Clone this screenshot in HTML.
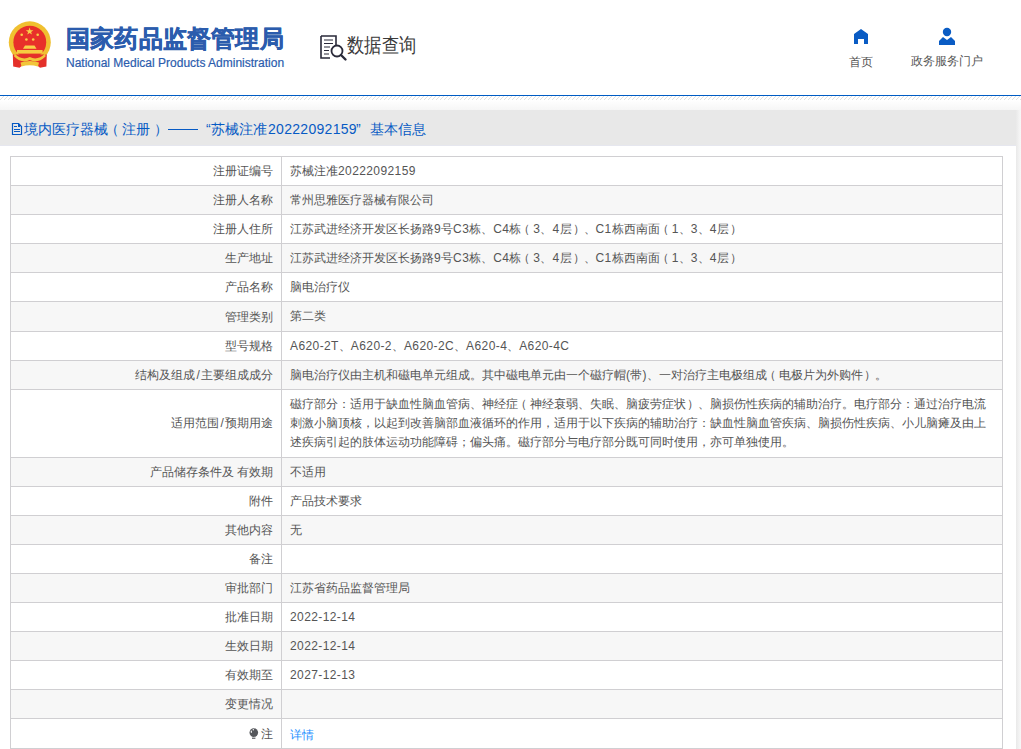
<!DOCTYPE html>
<html><head><meta charset="utf-8">
<style>
*{margin:0;padding:0;box-sizing:border-box}
html,body{width:1021px;height:749px;overflow:hidden;background:#fff;font-family:"Liberation Sans",sans-serif;font-size:12px;color:#555}
#hdr{position:absolute;left:0;top:0;width:1021px;height:95px;background:#fff}
#bline{position:absolute;left:0;top:95px;width:1021px;height:1px;background:#005cc4}
#stripe{position:absolute;left:0;top:96px;width:1021px;height:4px}
#grad{position:absolute;left:0;top:100px;width:1021px;height:10px;background:linear-gradient(#fff,#f6f6f6)}
#rside{position:absolute;left:1016px;top:110px;width:5px;height:639px;background:linear-gradient(90deg,#e9e9e9,#f8f8f8)}
#cont{position:absolute;left:0;top:110px;width:1016px;height:639px;background:#fff}
#band{position:absolute;left:0;top:0;width:1016px;height:36px;background:#e8e8e8;border-bottom:1px solid #e6e7ef}
.tt{position:absolute;top:10px;font-size:14px;color:#065ac4;white-space:nowrap;line-height:18px}
table{position:absolute;left:10px;top:46px;width:993px;border-collapse:collapse;table-layout:fixed}
td{border:1px solid #d0cfd2;font-size:12px;color:#555;line-height:19px;padding:0}
td.l{width:271px;text-align:right;padding-right:8px}
td.v{padding-left:8px}
tr:nth-child(even) td{background:#f7f7f7}
i{font-style:normal;letter-spacing:0.4px}
u{text-decoration:none;position:relative}
u.lp{left:-3px}
u.rp{left:1px}
</style></head><body>
<div id="hdr">
 <!-- emblem -->
 <svg style="position:absolute;left:0;top:0" width="60" height="75" viewBox="0 0 60 75">
  <circle cx="29.8" cy="42.3" r="21" fill="#f0c030"/>
  <circle cx="29.8" cy="42.2" r="16.4" fill="#e8302a"/>
  <path d="M29.6 27.6 l0.95 2.6 2.8 0 -2.25 1.7 0.85 2.7 -2.35 -1.65 -2.35 1.65 0.85 -2.7 -2.25 -1.7 2.8 0z" fill="#f8d048"/>
  <circle cx="21.7" cy="34.8" r="1.3" fill="#f8d048"/><circle cx="37.7" cy="34.8" r="1.3" fill="#f8d048"/>
  <circle cx="26.4" cy="39.5" r="1.3" fill="#f8d048"/><circle cx="33.2" cy="39.5" r="1.3" fill="#f8d048"/>
  <path d="M23 48.8 L25 45.6 H34.5 L36.5 48.8 Z" fill="#f8d048"/>
  <rect x="17" y="50" width="25.6" height="3.6" fill="#f6cc40"/>
  <path d="M12.8 54.5 H46.8 L46.4 66.5 L40 67.8 L36 64.5 H23.5 L19.5 67.8 L13.2 66.5 Z" fill="#e4302a"/>
  <path d="M14.5 53.5 Q22 61 29.8 57 Q37.5 61 45.2 53.5 L45.6 56.5 Q37.5 64 29.8 60 Q22 64 14.1 56.5 Z" fill="#f2c63a"/>
  <path d="M20.5 62.5 Q29.8 59.5 39 62.5 L38 66.5 Q29.8 64 21.5 66.5 Z" fill="#f2c63a"/>
 </svg>
 <div style="position:absolute;left:66px;top:25px;font-size:24px;font-weight:bold;color:#2b5cad;letter-spacing:0.2px;line-height:28px;white-space:nowrap;-webkit-text-stroke:0.4px #2b5cad">国家药品监督管理局</div>
 <div style="position:absolute;left:66px;top:56px;font-size:12px;color:#2b5cad;line-height:14px;white-space:nowrap;-webkit-text-stroke:0.2px #2b5cad">National Medical Products Administration</div>
 <!-- data query icon -->
 <svg style="position:absolute;left:319px;top:34px" width="30" height="28" viewBox="0 0 30 28">
  <path d="M2 2 H17 V11 M2 2 V24 H11" fill="none" stroke="#2a2a3a" stroke-width="1.6"/>
  <path d="M5 6 H14 M5 9.5 H14 M5 13 H11 M5 16.5 H10 M5 20 H10" stroke="#2a2a3a" stroke-width="1.2"/>
  <circle cx="18" cy="17" r="5.5" fill="none" stroke="#2a2a3a" stroke-width="1.8"/>
  <path d="M22 21 L26.5 25.5" stroke="#2a2a3a" stroke-width="2.4" stroke-linecap="round"/>
 </svg>
 <div style="position:absolute;left:347px;top:32px;font-size:18px;color:#3a3a3a;line-height:24px;white-space:nowrap;transform:scale(0.97,1.12);transform-origin:0 0">数据查询</div>
 <!-- home -->
 <svg style="position:absolute;left:854px;top:29px" width="14" height="15" viewBox="0 0 14 15">
  <path d="M7 0 L14 5 V15 H10 V10 H4 V15 H0 V5 Z" fill="#0a5cc4"/>
 </svg>
 <div style="position:absolute;left:849px;top:55px;font-size:12px;color:#555;line-height:14px;white-space:nowrap">首页</div>
 <!-- user -->
 <svg style="position:absolute;left:938px;top:27px" width="18" height="19" viewBox="0 0 18 19">
  <circle cx="9" cy="5" r="4.2" fill="#0a5cc4"/>
  <path d="M5 10 L9 13 L13 10 L17 14 V18 H1 V14 Z" fill="#0a5cc4"/>
 </svg>
 <div style="position:absolute;left:911px;top:54px;font-size:12px;color:#555;line-height:14px;white-space:nowrap">政务服务门户</div>
</div>
<div id="bline"></div>
<svg id="stripe" width="1021" height="4" shape-rendering="crispEdges"><defs><pattern id="pt" width="4" height="4" patternUnits="userSpaceOnUse"><rect x="3" y="0" width="1" height="1" fill="#e0e0e0"/><rect x="2" y="1" width="1" height="1" fill="#e0e0e0"/><rect x="1" y="2" width="1" height="1" fill="#e0e0e0"/><rect x="0" y="3" width="1" height="1" fill="#e0e0e0"/></pattern></defs><rect width="1021" height="4" fill="url(#pt)"/></svg>
<div id="grad"></div>
<div id="rside"></div>
<div id="cont">
 <div id="band"><svg style="position:absolute;left:11px;top:13px" width="12" height="13" viewBox="0 0 12 13" shape-rendering="crispEdges">
  <path d="M1.5 0.5 H7.5 L10.5 3.5 V11.5 H1.5 Z" fill="none" stroke="#065ac4" stroke-width="1.2" shape-rendering="auto"/>
  <rect x="7" y="1" width="2" height="3" fill="#065ac4"/>
  <rect x="3" y="3" width="3" height="1" fill="#065ac4"/>
  <rect x="3" y="6" width="6" height="1" fill="#065ac4"/>
  <rect x="3" y="8" width="6" height="1" fill="#065ac4"/>
 </svg>
 <div class="tt" style="left:24px">境内医疗器械</div>
 <div class="tt" style="left:105px">（</div>
 <div class="tt" style="left:122px">注册</div>
 <div class="tt" style="left:153.5px">）</div>
 <div class="tt" style="left:168px;width:30px;height:1px;top:19px;background:#065ac4"></div>
 <div class="tt" style="left:206px">“</div>
 <div class="tt" style="left:211px">苏械注准</div>
 <div class="tt" style="left:268px;letter-spacing:0.3px">20222092159</div>
 <div class="tt" style="left:356px">”</div>
 <div class="tt" style="left:370px">基本信息</div></div>
 <table>
  <tr style="height:29px"><td class="l">注册证编号</td><td class="v">苏械注准<i>20222092159</i></td></tr>
  <tr style="height:29px"><td class="l">注册人名称</td><td class="v">常州思雅医疗器械有限公司</td></tr>
  <tr style="height:29px"><td class="l">注册人住所</td><td class="v">江苏武进经济开发区长扬路<i>9</i>号<i>C3</i>栋、<i>C4</i>栋<u class="lp">（</u><i>3</i>、<i>4</i>层<u class="rp">）</u>、<i>C1</i>栋西南面<u class="lp">（</u><i>1</i>、<i>3</i>、<i>4</i>层<u class="rp">）</u></td></tr>
  <tr style="height:29px"><td class="l">生产地址</td><td class="v">江苏武进经济开发区长扬路<i>9</i>号<i>C3</i>栋、<i>C4</i>栋<u class="lp">（</u><i>3</i>、<i>4</i>层<u class="rp">）</u>、<i>C1</i>栋西南面<u class="lp">（</u><i>1</i>、<i>3</i>、<i>4</i>层<u class="rp">）</u></td></tr>
  <tr style="height:29px"><td class="l">产品名称</td><td class="v">脑电治疗仪</td></tr>
  <tr style="height:30px"><td class="l" style="padding-top:2px">管理类别</td><td class="v">第二类</td></tr>
  <tr style="height:29px"><td class="l">型号规格</td><td class="v"><i>A620-2T</i>、<i>A620-2</i>、<i>A620-2C</i>、<i>A620-4</i>、<i>A620-4C</i></td></tr>
  <tr style="height:29px"><td class="l">结构及组成<i style="letter-spacing:1.2px;margin-left:1.5px">/</i>主要组成成分</td><td class="v">脑电治疗仪由主机和磁电单元组成。其中磁电单元由一个磁疗帽<i>(</i>带<i>)</i>、一对治疗主电极组成<u class="lp">（</u>电极片为外购件<u class="rp">）</u>。</td></tr>
  <tr style="height:68px"><td class="l">适用范围<i style="letter-spacing:1.2px;margin-left:1.5px">/</i>预期用途</td><td class="v">磁疗部分：适用于缺血性脑血管病、神经症<u class="lp">（</u>神经衰弱、失眠、脑疲劳症状<u class="rp">）</u>、脑损伤性疾病的辅助治疗。电疗部分：通过治疗电流<br>刺激小脑顶核，以起到改善脑部血液循环的作用，适用于以下疾病的辅助治疗：缺血性脑血管疾病、脑损伤性疾病、小儿脑瘫及由上<br>述疾病引起的肢体运动功能障碍；偏头痛。磁疗部分与电疗部分既可同时使用，亦可单独使用。</td></tr>
  <tr style="height:29px"><td class="l">产品储存条件及 有效期</td><td class="v">不适用</td></tr>
  <tr style="height:29px"><td class="l">附件</td><td class="v">产品技术要求</td></tr>
  <tr style="height:29px"><td class="l">其他内容</td><td class="v">无</td></tr>
  <tr style="height:29px"><td class="l">备注</td><td class="v"></td></tr>
  <tr style="height:29px"><td class="l">审批部门</td><td class="v">江苏省药品监督管理局</td></tr>
  <tr style="height:29px"><td class="l">批准日期</td><td class="v"><i>2022-12-14</i></td></tr>
  <tr style="height:29px"><td class="l">生效日期</td><td class="v"><i>2022-12-14</i></td></tr>
  <tr style="height:29px"><td class="l">有效期至</td><td class="v"><i>2027-12-13</i></td></tr>
  <tr style="height:29px"><td class="l">变更情况</td><td class="v"></td></tr>
  <tr style="height:30px"><td class="l" style="padding-top:2px"><svg width="11" height="12" viewBox="0 0 11 12" style="vertical-align:-2px;margin-right:1px"><circle cx="4.8" cy="4.6" r="4.3" fill="#55575c"/><rect x="3" y="9.6" width="3.4" height="1.2" fill="#55575c"/><ellipse cx="2.3" cy="3.8" rx="0.6" ry="1.2" fill="#fff"/><circle cx="4.3" cy="1.7" r="0.7" fill="#fff"/></svg>注</td><td class="v"><span style="color:#1e90ff;position:relative;top:2px">详情</span></td></tr>
 </table>
</div>
</body></html>
